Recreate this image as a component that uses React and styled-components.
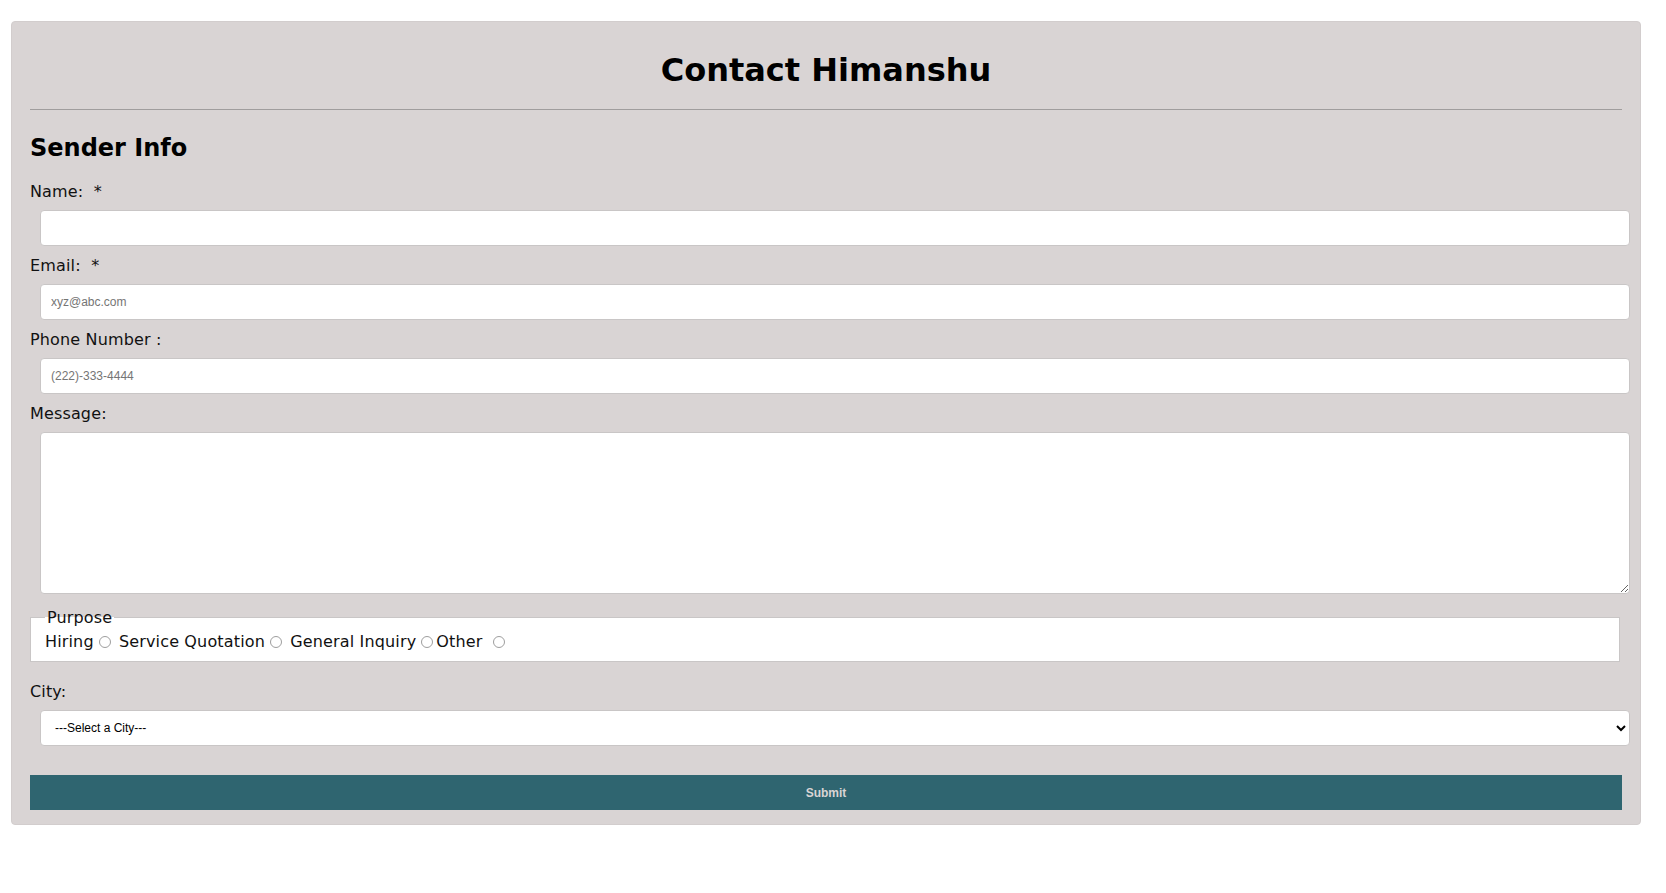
import styled, { createGlobalStyle } from "styled-components";

const GlobalStyle = createGlobalStyle`
  body {
    margin: 0;
    background-color: #FFFFFF;
    font-family: 'DejaVu Sans', Verdana, sans-serif;
  }
`;

const Page = styled.div`
  padding: 21px 25px 0 11px;
`;

const FormCard = styled.form`
  background-color: #D9D4D4;
  border: 1px solid #D2CDCD;
  border-radius: 4px;
  padding: 0 18px 14px 18px;
`;

const Title = styled.h1`
  font-size: 32px;
  font-weight: bold;
  text-align: center;
  color: #000000;
  margin: 0;
  padding-top: 30px;
  line-height: 37px;
`;

const Divider = styled.hr`
  border: none;
  border-top: 1px solid #A09D9D;
  margin: 20px 0 0 0;
`;

const SectionTitle = styled.h2`
  font-size: 24px;
  font-weight: bold;
  margin: 24px 0 20px 0;
  line-height: 28px;
`;

const Label = styled.label`
  display: block;
  font-size: 16px;
  line-height: 19px;
  letter-spacing: 0.15px;
  color: #111111;
`;

const fieldBase = `
  display: block;
  box-sizing: border-box;
  width: calc(100% - 2px);
  margin: 9px 0 10px 10px;
  padding: 0 10px;
  background-color: #FFFFFF;
  border: 1px solid #C9C6C6;
  border-radius: 4px;
  font-family: 'Liberation Sans', Arial, sans-serif;
  font-size: 12px;
  color: #222222;
  outline: none;

  &::placeholder {
    color: #757575;
  }
`;

const TextInput = styled.input`
  ${fieldBase}
  height: 36px;
`;

const MessageBox = styled.textarea`
  ${fieldBase}
  height: 162px;
  margin-bottom: 14px;
  padding: 8px 10px;
`;

const Purpose = styled.fieldset`
  box-sizing: border-box;
  width: 1590px;
  margin: 0 0 20px 0;
  padding: 5px 12px 10px 14px;
  background-color: #FFFFFF;
  border: 1px solid #C9C6C6;
  font-size: 16px;
  line-height: 19px;
  letter-spacing: 0.15px;
  color: #111111;
`;

const Legend = styled.legend`
  padding: 0 2px;
  margin-left: 0;
`;

const Radio = styled.input`
  appearance: none;
  width: 12px;
  height: 12px;
  margin: 0 3px 0 5px;
  border: 1px solid #9E9E9E;
  border-radius: 50%;
  background-color: #FFFFFF;
  vertical-align: -1px;
`;

const CitySelect = styled.select`
  ${fieldBase}
  height: 36px;
  padding: 0 6px 0 10px;
  margin-bottom: 29px;
  color: #000000;
`;

const SubmitButton = styled.button`
  display: block;
  width: 100%;
  height: 35px;
  border: none;
  background-color: #2F6570;
  color: #D9D4D4;
  font-family: 'Liberation Sans', Arial, sans-serif;
  font-size: 12px;
  font-weight: bold;
  cursor: pointer;
`;

const purposes = [
  { label: "Hiring", value: "hiring", after: " " },
  { label: "Service Quotation", value: "quote", after: " " },
  { label: "General Inquiry", value: "general", after: "" },
  { label: "Other\u00a0", value: "other", after: "" },
];

const App = () => {
  return (
    <Page>
      <GlobalStyle />
      <FormCard onSubmit={(e) => e.preventDefault()}>
        <Title>Contact Himanshu</Title>
        <Divider />
        <SectionTitle>Sender Info</SectionTitle>

        <Label htmlFor="name">Name:&nbsp; *</Label>
        <TextInput id="name" type="text" />

        <Label htmlFor="email">Email:&nbsp; *</Label>
        <TextInput id="email" type="email" placeholder="xyz@abc.com" />

        <Label htmlFor="phone">Phone Number :</Label>
        <TextInput id="phone" type="tel" placeholder="(222)-333-4444" />

        <Label htmlFor="message">Message:</Label>
        <MessageBox id="message" />

        <Purpose>
          <Legend>Purpose</Legend>
          {purposes.map((p) => (
            <span key={p.value}>
              {p.label}
              <Radio type="radio" name="purpose" value={p.value} />
              {p.after}
            </span>
          ))}
        </Purpose>

        <Label htmlFor="city">City:</Label>
        <CitySelect id="city" defaultValue="">
          <option value="">---Select a City---</option>
          <option value="delhi">Delhi</option>
          <option value="mumbai">Mumbai</option>
          <option value="bangalore">Bangalore</option>
        </CitySelect>

        <SubmitButton type="submit">Submit</SubmitButton>
      </FormCard>
    </Page>
  );
};

export default App;
